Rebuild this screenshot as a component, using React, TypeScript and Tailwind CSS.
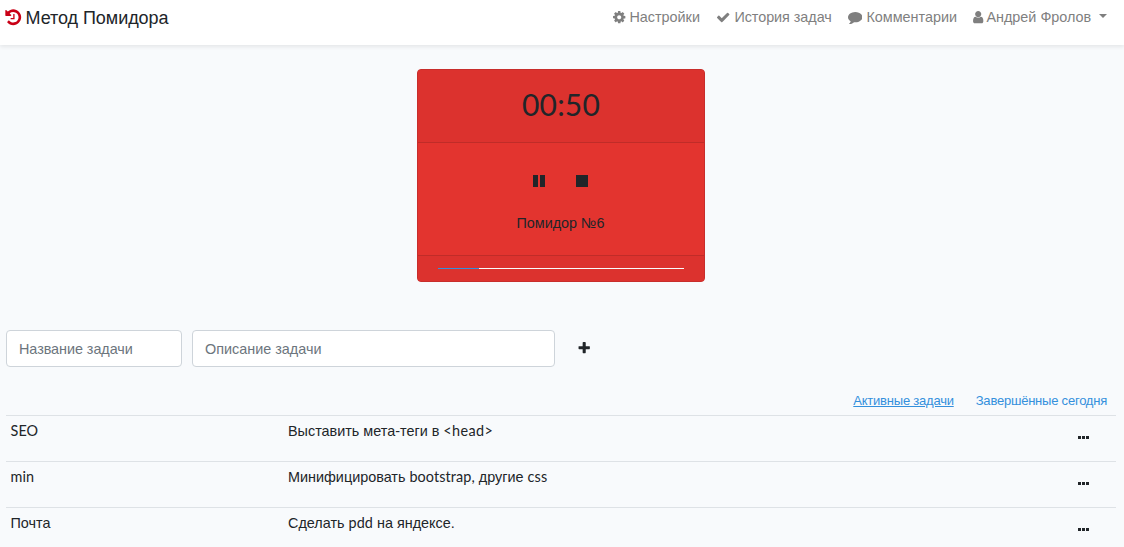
import type { ReactNode } from 'react';

const paths = {
  history:
    'M1664 896q0 156-61 298t-164 245-245 164-298 61q-172 0-327-72.5t-264-204.5q-7-10-6.5-22.5t8.5-20.5l137-138q10-9 25-9 16 2 23 12 73 95 179 147t225 52q104 0 198.5-40.5t163.5-109.5 109.5-163.5 40.5-198.5-40.5-198.5-109.5-163.5-163.5-109.5-198.5-40.5q-98 0-188 35.5t-160 101.5l137 138q31 30 14 69-17 40-59 40h-448q-26 0-45-19t-19-45v-448q0-42 40-59 39-17 69 14l130 129q107-101 244.5-156.5t284.5-55.5q156 0 298 61t245 164 164 245 61 298zm-640-288v448q0 14-9 23t-23 9h-320q-14 0-23-9t-9-23v-64q0-14 9-23t23-9h224v-352q0-14 9-23t23-9h64q14 0 23 9t9 23z',
  cog: 'M1152 896q0-106-75-181t-181-75-181 75-75 181 75 181 181 75 181-75 75-181zm512-109v222q0 12-8 23t-20 13l-185 28q-19 54-39 91 35 50 107 138 10 12 10 25t-9 23q-27 37-99 108t-94 71q-12 0-26-9l-138-108q-44 23-91 38-16 136-29 186-7 28-36 28h-222q-14 0-24.5-8.5t-11.5-21.5l-28-184q-49-16-90-37l-141 107q-10 9-25 9-14 0-25-11-126-114-165-168-7-10-7-23 0-12 8-23 15-21 51-66.5t54-70.5q-27-50-41-99l-183-27q-13-2-21-12.5t-8-23.5v-222q0-12 8-23t19-13l186-28q14-46 39-92-40-57-107-138-10-12-10-24 0-10 9-23 26-36 98.5-107.5t94.5-71.5q13 0 26 10l138 107q44-23 91-38 16-136 29-186 7-28 36-28h222q14 0 24.5 8.5t11.5 21.5l28 184q49 16 90 37l142-107q9-9 24-9 13 0 25 10 129 119 165 170 7 8 7 22 0 12-8 23-15 21-51 66.5t-54 70.5q26 50 41 98l183 28q13 2 21 12.5t8 23.5z',
  check:
    'M1671 566q0 40-28 68l-724 724-136 136q-28 28-68 28t-68-28l-136-136-362-362q-28-28-28-68t28-68l136-136q28-28 68-28t68 28l294 295 656-657q28-28 68-28t68 28l136 136q28 28 28 68z',
  comment:
    'M1792 896q0 174-120 321.5t-326 233-450 85.5q-70 0-145-8-198 175-460 242-49 14-114 22-17 2-30.5-9t-17.5-29v-1q-3-4-.5-12t2-10 4.5-9.5l6-9 7-8.5 8-9q7-8 31-34.5t34.5-38 31-39.5 32.5-51 27-59 26-76q-157-89-247.5-220t-90.5-281q0-130 71-248.5t191-204.5 286-136.5 348-50.5q244 0 450 85.5t326 233 120 321.5z',
  user: 'M1536 1399q0 109-62.5 187t-150.5 78h-854q-88 0-150.5-78t-62.5-187q0-85 8.5-160.5t31.5-152 58.5-131 94-89 134.5-34.5q131 128 313 128t313-128q76 0 134.5 34.5t94 89 58.5 131 31.5 152 8.5 160.5zm-256-887q0 159-112.5 271.5t-271.5 112.5-271.5-112.5-112.5-271.5 112.5-271.5 271.5-112.5 271.5 112.5 112.5 271.5z',
  plus: 'M1600 736v192q0 40-28 68t-68 28h-416v416q0 40-28 68t-68 28h-192q-40 0-68-28t-28-68v-416h-416q-40 0-68-28t-28-68v-192q0-40 28-68t68-28h416v-416q0-40 28-68t68-28h192q40 0 68 28t28 68v416h416q40 0 68 28t28 68z',
};

function Icon({ name, className }: { name: keyof typeof paths; className: string }) {
  return (
    <svg viewBox="0 0 1792 1792" fill="currentColor" className={`shrink-0 ${className}`}>
      <path d={paths[name]} />
    </svg>
  );
}

function NavItem({ icon, className, iconClass, children }: { icon: keyof typeof paths; className: string; iconClass: string; children: ReactNode }) {
  return (
    <a href="#" className={`flex shrink-0 items-center whitespace-nowrap ${className}`}>
      <Icon name={icon} className={iconClass} />
      {children}
    </a>
  );
}

const latin = "font-['Lato'] leading-none tracking-[0.1px]";

const tasks = [
  { title: <span className={latin}>SEO</span>, text: <>Выставить мета-теги в <span className="font-['Lato'] leading-none tracking-[0.4px]">&lt;head&gt;</span></> },
  { title: <span className={latin}>min</span>, text: <>Минифицировать <span className={latin}>bootstrap,</span> другие <span className={latin}>css</span></> },
  { title: <>Почта</>, text: <>Сделать <span className={latin}>pdd</span> на яндексе.</> },
];

export default function App() {
  return (
    <div className="h-[547px] overflow-hidden bg-[#f8fafc] font-['Liberation_Sans',sans-serif] text-[14.4px] leading-[23px] text-[#212529]">
      <nav className="flex h-[45px] bg-white pl-[4px] shadow-[0_2px_4px_rgba(0,0,0,0.08)]">
        <a href="#" className="flex h-[36px] items-center whitespace-nowrap text-[18px] tracking-[-0.05px] text-[#212529]">
          <Icon name="history" className="mr-[3px] mb-px size-[18.5px] text-[#c90016]" />
          Метод Помидора
        </a>
        <div className="ml-auto flex h-[34px] items-center pr-[17px] text-[#7f7f7f]">
          <NavItem icon="cog" iconClass="size-[14.4px] mr-[3px]" className="w-[104px]">Настройки</NavItem>
          <NavItem icon="check" iconClass="size-[14.4px] mr-[4px]" className="w-[132px] tracking-[-0.05px]">История задач</NavItem>
          <NavItem icon="comment" iconClass="size-[14.4px] mr-[4px]" className="w-[123px]">Комментарии</NavItem>
          <NavItem icon="user" iconClass="size-[14.4px] mr-[1px]" className="w-[136px]">
            Андрей Фролов
            <svg viewBox="0 0 8 4" className="mb-[3px] ml-auto h-[4px] w-[8px]" fill="currentColor"><path d="M0 0h8L4 4z" /></svg>
          </NavItem>
        </div>
      </nav>

      <section className="mt-[24px] ml-[417px] flex h-[213px] w-[288px] flex-col overflow-hidden rounded-[4px] border border-[#c82d2b] bg-[#e3342f] text-center">
        <div className="h-[73px] border-b border-[#c02c28] bg-[#dc322e] pt-[15px] font-['Lato'] text-[30px] leading-[38px] tracking-[0.2px]">00:50</div>
        <div className="flex h-[112px] flex-col items-center pt-[32px]">
          <div className="flex gap-[31px] pr-[1px]">
            <svg viewBox="0 0 12 12" className="size-[12px]" fill="currentColor"><path d="M0 0h5v12H0zM7 0h5v12H7z" /></svg>
            <svg viewBox="0 0 12 12" className="size-[12px]" fill="currentColor"><path d="M0 0h12v12H0z" /></svg>
          </div>
          <p className="mt-[25px] pr-px">Помидор №6</p>
        </div>
        <div className="flex-1 border-t border-[#c02c28] bg-[#dc322e] px-[20px] pt-[12px]">
          <div className="h-px w-full bg-[#f8fafc]"><div className="h-px w-[41px] bg-[#3490dc]" /></div>
        </div>
      </section>

      <form className="mt-[48px] ml-[6px] flex h-[37px] items-center">
        <input placeholder="Название задачи" className="h-[37px] w-[176px] rounded-[4px] border border-[#ced4da] bg-white px-[12px] tracking-[-0.05px] placeholder:text-[#6c757d]" />
        <input placeholder="Описание задачи" className="ml-[10px] h-[37px] w-[363px] rounded-[4px] border border-[#ced4da] bg-white px-[12px] placeholder:text-[#6c757d]" />
        <Icon name="plus" className="mb-[1px] ml-[22px] size-[14.4px]" />
      </form>

      <div className="mt-[23px] flex h-[25px] justify-end gap-[22px] pr-[17px] text-[13px] leading-[22px] tracking-[-0.22px] text-[#3490dc]">
        <a href="#" className="whitespace-nowrap underline">Активные задачи</a>
        <a href="#" className="whitespace-nowrap">Завершённые сегодня</a>
      </div>

      <div className="mr-[8px] ml-[6px]">
        {tasks.map((task, i) => (
          <div key={i} className="flex h-[46px] border-t border-[#dee2e6] pt-[4px]">
            <div className="w-[278px] pl-[4.5px]">{task.title}</div>
            <div className="flex-1 pl-[4px]">{task.text}</div>
            <svg viewBox="0 0 11 3" className="mt-[16px] mr-[27px] h-[3px] w-[11px]" fill="currentColor"><path d="M0 0h3v3H0zM4 0h3v3H4zM8 0h3v3H8z" /></svg>
          </div>
        ))}
      </div>
    </div>
  );
}
